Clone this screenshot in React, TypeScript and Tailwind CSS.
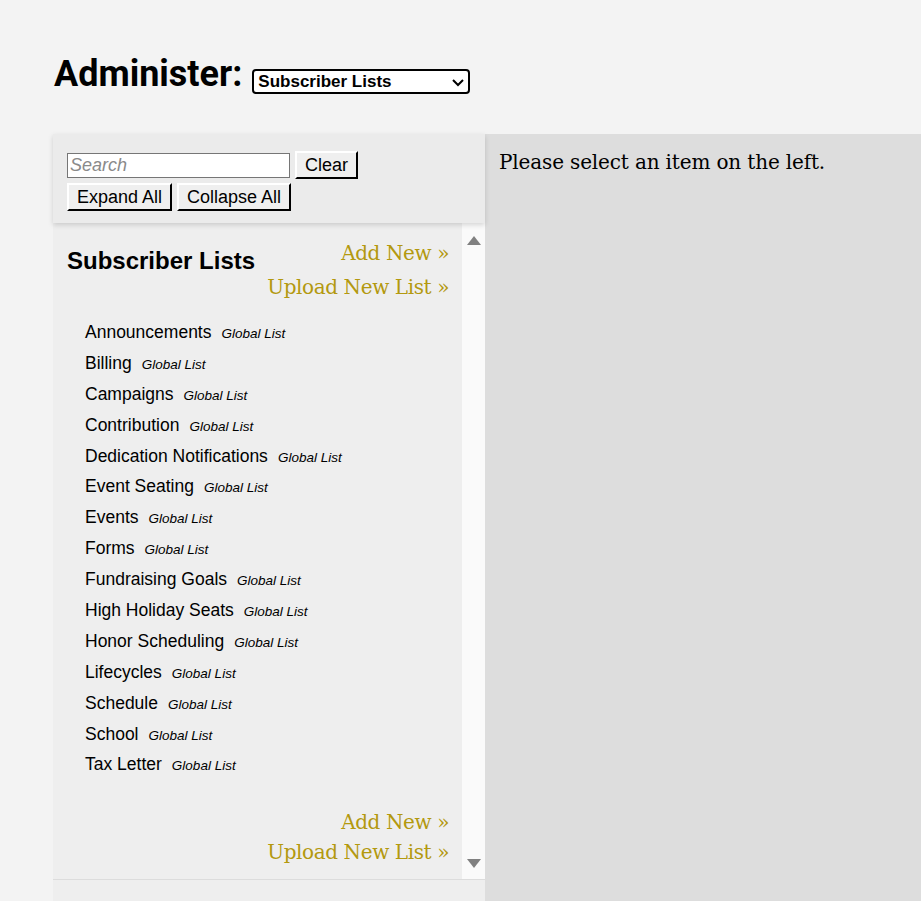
const lists = [
  "Announcements",
  "Billing",
  "Campaigns",
  "Contribution",
  "Dedication Notifications",
  "Event Seating",
  "Events",
  "Forms",
  "Fundraising Goals",
  "High Holiday Seats",
  "Honor Scheduling",
  "Lifecycles",
  "Schedule",
  "School",
  "Tax Letter",
];

const btn =
  "bg-[#efefef] border-2 border-t-white border-l-white border-b-black border-r-black px-[8px] text-[18px] leading-[22px] text-black";

function GoldLinks({ gap }: { gap: string }) {
  return (
    <div
      className={
        "flex flex-col items-end text-[#b3990f] text-[20px] tracking-[-0.4px] font-['DejaVu_Serif',serif] " +
        gap
      }
    >
      <a>Add New »</a>
      <a>Upload New List »</a>
    </div>
  );
}

export default function App() {
  return (
    <div className="min-h-[901px] bg-[#f3f3f3] font-['Liberation_Sans',Arial,sans-serif] text-black">
      <div className="flex gap-[10px] pl-[54px] pt-[53px] h-[134px] items-start">
        <h1 className="text-[36px] leading-[42px] font-bold font-['Roboto',sans-serif]">
          Administer:
        </h1>
        <div className="mt-[16px] w-[218px] h-[25px] border-2 border-black rounded-[4px] bg-white flex items-center justify-between pl-[4px] pr-[2px]">
          <span className="text-[17px] font-bold leading-none">Subscriber Lists</span>
          <svg width="16" height="16" viewBox="0 0 16 16" fill="none" stroke="black" strokeWidth="2">
            <path d="M3 6l5 5 5-5" />
          </svg>
        </div>
      </div>

      <div className="flex ml-[53px]">
        <div className="w-[432px] flex flex-col bg-[#eeeeee]">
          <div className="h-[89px] bg-[#ebebeb] shadow-[0_2px_5px_rgba(0,0,0,0.15)] relative z-10 pl-[14px] pt-[17px] flex flex-col gap-[4px]">
            <div className="flex items-center gap-[5px]">
              <input
                placeholder="Search"
                className="w-[223px] h-[25px] bg-white border border-[#767676] px-[2px] text-[18px] italic placeholder:text-[#8a8a8a] outline-none"
              />
              <button className={btn + " h-[28px]"}>Clear</button>
            </div>
            <div className="flex gap-[5px]">
              <button className={btn + " h-[28px]"}>Expand All</button>
              <button className={btn + " h-[28px]"}>Collapse All</button>
            </div>
          </div>

          <div className="flex h-[656px]">
            <div className="flex-1 pl-[14px] pr-[13px] pt-[13px] flex flex-col">
              <div className="flex justify-between items-start">
                <h2 className="text-[24px] font-bold mt-[12px] leading-[26px]">Subscriber Lists</h2>
                <GoldLinks gap="leading-[34px]" />
              </div>
              <ul className="mt-[16px] pl-[18px] flex flex-col">
                {lists.map((name) => (
                  <li key={name} className="h-[30.9px] flex items-baseline gap-[10px]">
                    <span className="text-[17.5px] leading-[24px]">{name}</span>
                    <span className="text-[13.5px] italic">Global List</span>
                  </li>
                ))}
              </ul>
              <div className="mt-auto mb-[12px]">
                <GoldLinks gap="leading-[30px]" />
              </div>
            </div>
            <div className="w-[23px] bg-[#fafafa] flex flex-col items-center justify-between pt-[12px] pb-[10px]">
              <svg width="16" height="11" viewBox="0 0 16 11">
                <path d="M8 1L15 10H1Z" fill="#808080" />
              </svg>
              <svg width="16" height="11" viewBox="0 0 16 11">
                <path d="M1 1H15L8 10Z" fill="#808080" />
              </svg>
            </div>
          </div>
          <div className="border-t border-[#dcdcdc] h-[22px]" />
        </div>

        <div className="flex-1 bg-[#dddddd] pl-[14px] pt-[15px]">
          <p className="text-[20px] leading-[26px] tracking-[-0.15px] font-['DejaVu_Serif',serif]">
            Please select an item on the left.
          </p>
        </div>
      </div>
    </div>
  );
}
